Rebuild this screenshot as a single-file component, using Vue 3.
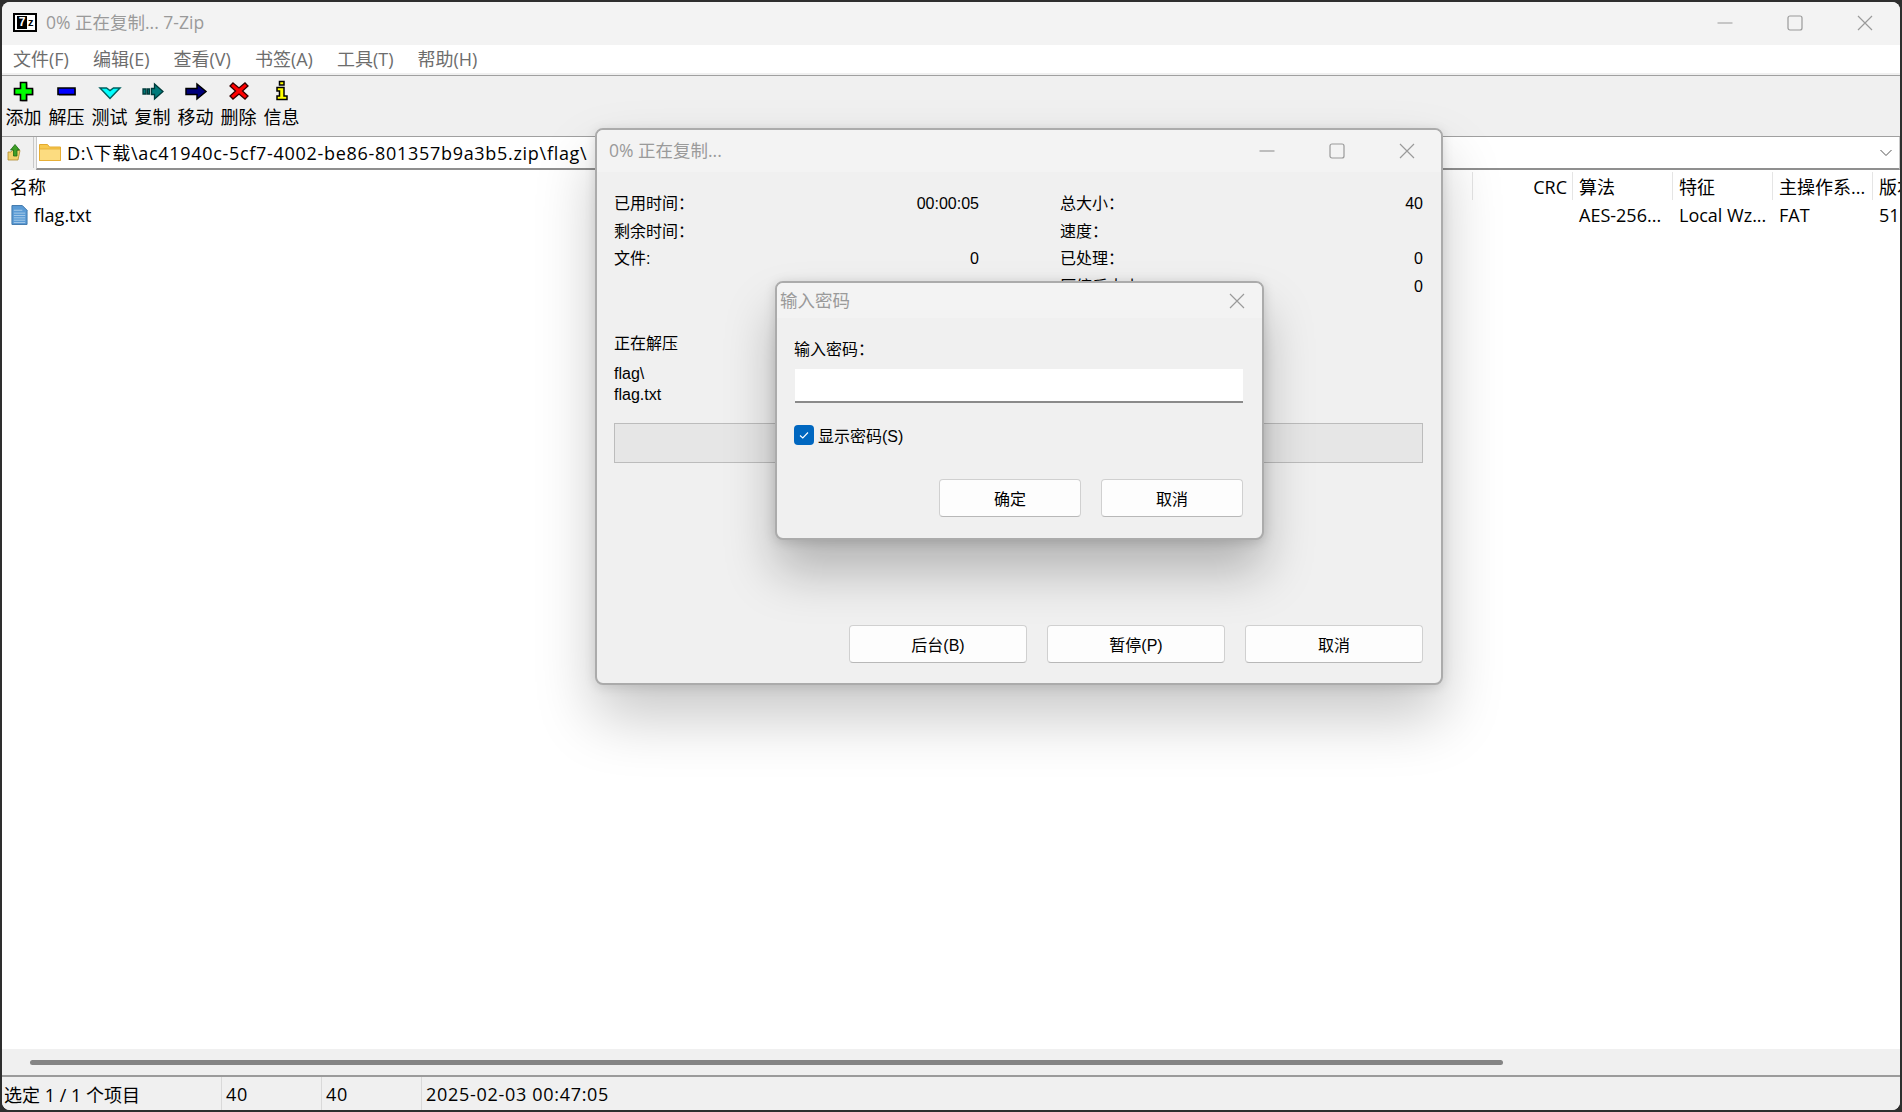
<script setup>
const menus = ['文件(F)', '编辑(E)', '查看(V)', '书签(A)', '工具(T)', '帮助(H)']
const tools = [
  { label: '添加', key: 'add' },
  { label: '解压', key: 'minus' },
  { label: '测试', key: 'test' },
  { label: '复制', key: 'copy' },
  { label: '移动', key: 'move' },
  { label: '删除', key: 'del' },
  { label: '信息', key: 'info' },
]
const stats = [
  { l: '已用时间：', r: '00:00:05', l2: '总大小：', r2: '40' },
  { l: '剩余时间：', r: '', l2: '速度：', r2: '' },
  { l: '文件:', r: '0', l2: '已处理：', r2: '0' },
  { l: '', r: '', l2: '压缩后大小：', r2: '0' },
]
const columns = [
  { t: 'CRC', v: '', w: 100, right: true },
  { t: '算法', v: 'AES-256...', w: 100 },
  { t: '特征', v: 'Local Wz...', w: 100 },
  { t: '主操作系...', v: 'FAT', w: 100 },
  { t: '版本', v: '51', w: 28 },
]
</script>

<template>
  <div class="desktop">
    <div class="main">
      <header class="titlebar">
        <span class="logo"><i>7</i><b>z</b></span>
        <span class="title">0% 正在复制... 7-Zip</span>
        <div class="caps">
          <svg class="cap" viewBox="0 0 16 16"><path d="M0.5 8h15" /></svg>
          <svg class="cap" viewBox="0 0 16 16"><rect x="1" y="1" width="14" height="14" rx="2" /></svg>
          <svg class="cap" viewBox="0 0 16 16"><path d="M1 1l14 14M15 1L1 15" /></svg>
        </div>
      </header>

      <nav class="menubar">
        <span v-for="m in menus" :key="m" class="menu">{{ m }}</span>
      </nav>
      <div class="menusep"></div>

      <div class="toolbar">
        <div v-for="t in tools" :key="t.key" class="tool">
          <svg class="ticon" viewBox="0 0 24 24">
            <g v-if="t.key === 'add'">
              <path d="M9.5 4.5h6v6h6v6h-6v6h-6v-6h-6v-6h6z" fill="#9a9a9a" />
              <path d="M8.5 3.5h6v6h6v6h-6v6h-6v-6h-6v-6h6z" fill="#00ff00" stroke="#000" stroke-width="1.6" />
            </g>
            <g v-else-if="t.key === 'minus'">
              <path d="M4 10h17v7H4z" fill="#9a9a9a" />
              <path d="M3 9h17v6.5H3z" fill="#0000ff" stroke="#000" stroke-width="1.6" />
            </g>
            <path v-else-if="t.key === 'test'" d="M2 9h6.5l3.5 2.5L15.5 9H22L12 19.5z" fill="#00ffff" stroke="#00605f" stroke-width="1.5" />
            <g v-else-if="t.key === 'copy'" fill="#007b7b" stroke="#003b3b" stroke-width="1.3">
              <path d="M2 10h3v5H2zM6.5 10h2v5h-2z" />
              <path d="M10.5 9.5h3V5l8.5 7.5-8.5 7.5V15.500h-3z" />
            </g>
            <path v-else-if="t.key === 'move'" d="M2 9.500h11V5l9 7.500-9 7.500v-4.500H2z" fill="#00007b" stroke="#000" stroke-width="1.500" />
            <path v-else-if="t.key === 'del'" d="M6 4l6 5 6-5 3 3-5.500 5 5.500 5-3 3-6-5-6 5-3-3 5.500-5L3 7z" fill="#ff0000" stroke="#300" stroke-width="1.300" />
            <g v-else fill="#ffff00" stroke="#000" stroke-width="1.500">
              <path d="M9.500 2.500h4.500v3.500H9.500z" />
              <path d="M7 8.500h7V17h3v3.500H7V17h2.500v-5H7z" />
            </g>
          </svg>
          <span class="tlabel">{{ t.label }}</span>
        </div>
      </div>

      <div class="addressbar">
        <div class="upwrap">
          <svg class="up" viewBox="0 0 14 17">
            <path d="M1 8h3l1.500-1.500H13L11 16H1z" fill="#f2d26c" stroke="#b08c2e" stroke-width=".8" />
            <path d="M8 .5l4.500 5.500H10v6H6.500V6H3.500z" fill="#3f9f27" stroke="#1c6b12" stroke-width=".8" />
          </svg>
        </div>
        <div class="path">
          <svg class="folder" viewBox="0 0 22 17">
            <path d="M.5.500h8l2 2.500h11v13.500H.5z" fill="#f7c94f" stroke="#e4aa2f" />
            <path d="M.5 5h21v11.500H.5z" fill="#fcdc80" stroke="#e4aa2f" stroke-width=".8" />
          </svg>
          <span class="pathtext">D:\下载\ac41940c-5cf7-4002-be86-801357b9a3b5.zip\flag\</span>
          <svg class="chev" viewBox="0 0 12 8"><path d="M.5 1l5.500 5.500L11.500 1" /></svg>
        </div>
      </div>

      <div class="list">
        <div class="listhead">
          <span class="hname">名称</span>
          <span class="spacer"></span>
          <span
            v-for="c in columns"
            :key="c.t"
            class="hcell"
            :class="{ right: c.right }"
            :style="{ width: c.w + 'px' }"
          >{{ c.t }}</span>
        </div>
        <div class="listrow">
          <svg class="fileicon" viewBox="0 0 18 22">
            <path d="M1 1h11l5 5v15H1z" fill="#5b9bd5" stroke="#3a74a8" />
            <path d="M3 6h9M3 9h12M3 11.500h12M3 14h12M3 16.500h12M3 19h12" stroke="#a9cdea" stroke-width="1" />
          </svg>
          <span class="fname">flag.txt</span>
          <span class="spacer"></span>
          <span
            v-for="c in columns"
            :key="c.t"
            class="vcell"
            :style="{ width: c.w + 'px' }"
          >{{ c.v }}</span>
        </div>
      </div>

      <div class="scrollbar"><div class="thumb"></div></div>

      <footer class="statusbar">
        <span class="st st1">选定 1 / 1 个项目</span>
        <span class="st st2">40</span>
        <span class="st st2">40</span>
        <span class="st st3">2025-02-03 00:47:05</span>
      </footer>
    </div>

    <section class="dialog progress">
      <header class="dtitle">
        <span class="dtitletext">0% 正在复制...</span>
        <div class="caps dcaps">
          <svg class="cap" viewBox="0 0 16 16"><path d="M0.5 8h15" /></svg>
          <svg class="cap" viewBox="0 0 16 16"><rect x="1" y="1" width="14" height="14" rx="2" /></svg>
          <svg class="cap" viewBox="0 0 16 16"><path d="M1 1l14 14M15 1L1 15" /></svg>
        </div>
      </header>
      <div class="pbody">
        <div class="stats">
          <div v-for="(s, i) in stats" :key="i" class="statrow">
            <span class="sl">{{ s.l }}</span><span class="sr">{{ s.r }}</span>
            <span class="sl2">{{ s.l2 }}</span><span class="sr2">{{ s.r2 }}</span>
          </div>
        </div>
        <div class="oper">正在解压</div>
        <div class="files">flag\<br />flag.txt</div>
        <div class="bar"></div>
        <div class="pbuttons">
          <button class="btn wide">后台(B)</button>
          <button class="btn wide">暂停(P)</button>
          <button class="btn wide">取消</button>
        </div>
      </div>
    </section>

    <section class="dialog password">
      <header class="dtitle small">
        <span class="dtitletext pw">输入密码</span>
        <svg class="cap pwclose" viewBox="0 0 16 16"><path d="M1 1l14 14M15 1L1 15" /></svg>
      </header>
      <div class="pwbody">
        <div class="pwlabel">输入密码：</div>
        <div class="pwinput"></div>
        <div class="check">
          <span class="box">
            <svg viewBox="0 0 12 12"><path d="M2 6.500l2.800 2.500L10 3.500" /></svg>
          </span>
          <span>显示密码(S)</span>
        </div>
        <div class="pwbuttons">
          <button class="btn narrow">确定</button>
          <button class="btn narrow">取消</button>
        </div>
      </div>
    </section>
  </div>
</template>

<style>
html, body { margin: 0; background: #2e2e2e; }
</style>

<style scoped>
.desktop {
  position: relative;
  width: 1902px;
  height: 1112px;
  background: #2e2e2e;
  overflow: hidden;
  padding: 2px;
  box-sizing: border-box;
}
.main {
  width: 1898px;
  height: 1108px;
  background: #fff;
  border-radius: 8px;
  overflow: hidden;
  display: flex;
  flex-direction: column;
  font-family: "Open Sans", "Noto Sans CJK SC", sans-serif;
  font-size: 18px;
  color: #000;
}
.titlebar {
  height: 43px;
  flex: none;
  background: #f3f3f3;
  display: flex;
  align-items: center;
  padding: 0 0 2px 11px;
  box-sizing: border-box;
}
.logo {
  width: 24px;
  height: 19px;
  background: #fff;
  border: 2px solid #000;
  box-sizing: border-box;
  display: flex;
  align-items: stretch;
  padding: 1px 1px 1px 2px;
  margin-right: 9px;
  font-family: "Liberation Sans", sans-serif;
  font-weight: 700;
  line-height: 13px;
  overflow: hidden;
}
.logo i { font-style: normal; background: #000; color: #fff; width: 11px; font-size: 12px; text-align: center; }
.logo b { color: #000; width: 7px; font-size: 11px; text-align: center; }
.title { font-size: 17.500px; color: #9a9a9a; margin-bottom: 2px; }
.caps {
  margin-left: auto;
  display: flex;
  gap: 54px;
  padding-right: 27px;
}
.cap {
  width: 16px;
  height: 16px;
  fill: none;
  stroke: #9a9a9a;
  stroke-width: 1.200;
}
.menubar {
  height: 28px;
  flex: none;
  background: #fff;
  display: flex;
  align-items: center;
  padding: 0 0 2px 11px;
  gap: 24px;
  font-size: 18px;
  color: #6d6d6d;
  box-sizing: border-box;
}
.menusep {
  height: 3px;
  flex: none;
  background: #f0f0f0;
  border-bottom: 1px solid #a0a0a0;
  box-sizing: border-box;
}
.menu { white-space: nowrap; }
.toolbar {
  height: 60px;
  flex: none;
  background: #f0f0f0;
  display: flex;
}
.tool {
  width: 43px;
  display: flex;
  flex-direction: column;
  align-items: center;
}
.ticon { width: 24px; height: 24px; margin-top: 3px; flex: none; }
.tlabel { font-size: 18px; line-height: 24px; color: #000; white-space: nowrap; margin-top: 2px; }
.addressbar {
  height: 34px;
  flex: none;
  display: flex;
  background: #f0f0f0;
  border-top: 1px solid #a0a0a0;
  box-sizing: border-box;
}
.upwrap {
  width: 32px;
  flex: none;
  box-sizing: border-box;
  border-right: 1px solid #c8c8c8;
  margin-bottom: 2px;
  padding: 7px 0 0 5px;
}
.up { width: 14px; height: 17px; display: block; }
.path {
  flex: 1;
  margin-left: 2px;
  background: #fff;
  border-left: 1px solid #c8c8c8;
  border-right: 1px solid #c8c8c8;
  border-bottom: 2px solid #8f8f8f;
  display: flex;
  align-items: center;
  padding: 0 0 1px 2px;
  position: relative;
}
.folder { width: 22px; height: 17px; margin-right: 6px; flex: none; }
.pathtext { font-size: 18px; white-space: nowrap; letter-spacing: .7px; margin-bottom: 1px; }
.chev {
  position: absolute;
  right: 7px;
  top: 12px;
  width: 12px;
  height: 8px;
  fill: none;
  stroke: #555;
  stroke-width: 1;
}
.list { flex: 1; background: #fff; min-height: 0; }
.listhead {
  height: 32px;
  display: flex;
  align-items: flex-start;
  padding-top: 2px;
  box-sizing: border-box;
}
.hname { padding-left: 8px; line-height: 30px; }
.spacer { flex: 1; }
.hcell {
  height: 28px;
  line-height: 30px;
  padding-left: 6px;
  border-left: 1px solid #e5e5e5;
  box-sizing: border-box;
  white-space: nowrap;
  overflow: hidden;
  flex: none;
}
.hcell.right { text-align: right; padding-right: 5px; }
.listrow { height: 26px; display: flex; align-items: center; }
.fileicon { width: 17px; height: 22px; margin-left: 9px; flex: none; }
.fname { margin-left: 6px; }
.vcell {
  box-sizing: border-box;
  padding-left: 7px;
  white-space: nowrap;
  overflow: hidden;
  flex: none;
}
.scrollbar {
  height: 26px;
  flex: none;
  background: #f0f0f0;
  display: flex;
  align-items: center;
  padding-left: 28px;
}
.thumb {
  width: 1473px;
  height: 5px;
  border-radius: 3px;
  background: #858585;
}
.statusbar {
  height: 35px;
  flex: none;
  background: #f0f0f0;
  border-top: 2px solid #9b9b9b;
  box-sizing: border-box;
  display: flex;
  align-items: stretch;
  font-size: 18px;
}
.st {
  display: flex;
  align-items: center;
  box-sizing: border-box;
  border-right: 1px solid #d9d9d9;
  white-space: nowrap;
  letter-spacing: .7px;
  padding-left: 4px;
}
.st1 { width: 220px; padding-left: 2px; letter-spacing: 0; }
.st2 { width: 100px; }
.st3 { flex: 1; border-right: none; }

.dialog {
  position: absolute;
  box-sizing: border-box;
  background: #f0f0f0;
  border: 2px solid #ababab;
  border-radius: 8px;
  font-family: "Liberation Sans", "Noto Sans CJK SC", sans-serif;
  font-size: 16px;
  color: #000;
}
.progress {
  left: 595px;
  top: 128px;
  width: 848px;
  height: 557px;
  box-shadow: 0 32px 60px rgba(0, 0, 0, .22), 0 2px 12px rgba(0, 0, 0, .12);
}
.password {
  left: 775px;
  top: 281px;
  width: 489px;
  height: 259px;
  box-shadow: 0 32px 50px rgba(0, 0, 0, .25), 0 2px 12px rgba(0, 0, 0, .15);
}
.dtitle {
  height: 42px;
  background: #f3f3f3;
  display: flex;
  align-items: center;
  border-radius: 6px 6px 0 0;
  position: relative;
}
.dtitle.small { height: 35px; }
.dtitletext {
  color: #9a9a9a;
  font-size: 17.500px;
  padding: 0 0 3px 12px;
  font-family: "Open Sans", "Noto Sans CJK SC", sans-serif;
}
.dtitletext.pw { padding: 0 0 2px 3px; }
.dcaps { padding-right: 26px; }
.pwclose { position: absolute; right: 17px; top: 10px; }
.pbody { padding: 18px 18px 0 17px; }
.stats { height: 111px; }
.statrow {
  display: grid;
  grid-template-columns: 200px 165px 201px 1fr;
  height: 27.700px;
  line-height: 27.700px;
}
.sl { white-space: nowrap; }
.sr, .sr2 { text-align: right; }
.sl2 { padding-left: 81px; white-space: nowrap; grid-column: 3; }
.sr { grid-column: 2; }
.oper { margin-top: 33px; line-height: 20px; }
.files { margin-top: 10px; line-height: 20.500px; }
.bar {
  margin-top: 18px;
  height: 40px;
  background: #e6e6e6;
  border: 1px solid #bcbcbc;
  box-sizing: border-box;
}
.pbuttons {
  position: absolute;
  right: 18px;
  bottom: 20px;
  display: flex;
  gap: 20px;
}
.btn {
  font: inherit;
  color: #000;
  background: #fdfdfd;
  border: 1px solid #d0d0d0;
  border-bottom-color: #b8b8b8;
  border-radius: 4px;
  height: 38px;
  padding: 0;
  box-sizing: border-box;
}
.btn.wide { width: 178px; }
.btn.narrow { width: 142px; }
.pwbody { padding: 0 19px 0 18px; }
.pwlabel { margin-top: 22px; line-height: 20px; margin-left: -1px; }
.pwinput {
  margin-top: 9px;
  height: 34px;
  background: #fff;
  border-bottom: 2px solid #8a8a8a;
  box-sizing: border-box;
}
.check {
  display: flex;
  align-items: center;
  gap: 4px;
  margin: 22px 0 0 -1px;
  height: 20px;
}
.box {
  width: 20px;
  height: 20px;
  background: #0067c0;
  border-radius: 4px;
  display: flex;
  align-items: center;
  justify-content: center;
}
.box svg { width: 12px; height: 12px; fill: none; stroke: #fff; stroke-width: 1.100; }
.pwbuttons {
  position: absolute;
  right: 19px;
  bottom: 21px;
  display: flex;
  gap: 20px;
}
</style>
